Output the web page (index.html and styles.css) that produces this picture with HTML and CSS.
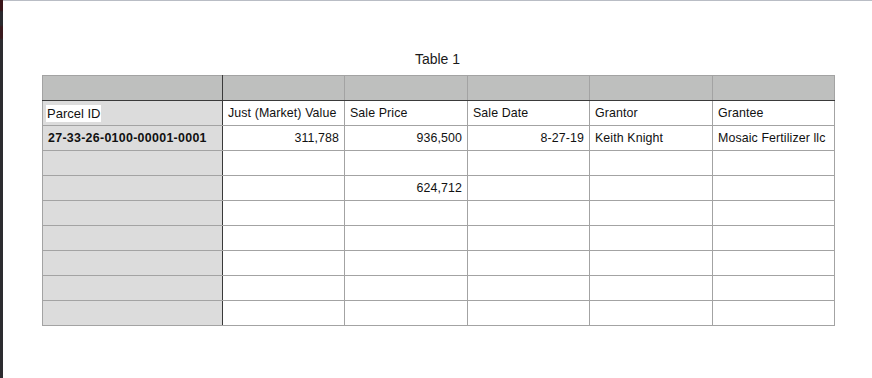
FILE: index.html
```html
<!DOCTYPE html>
<html>
<head>
<meta charset="utf-8">
<link rel="stylesheet" href="styles.css">
</head>
<body>
<div class="strip"></div>
<div class="page">
  <div class="title">Table 1</div>
  <table class="grid">
    <colgroup>
      <col class="c1"><col class="c2"><col class="c3"><col class="c4"><col class="c5"><col class="c6">
    </colgroup>
    <tr class="head"><td class="first"></td><td></td><td></td><td></td><td></td><td></td></tr>
    <tr><td class="first"><span class="hl">Parcel ID</span></td><td>Just (Market) Value</td><td>Sale Price</td><td>Sale Date</td><td>Grantor</td><td>Grantee</td></tr>
    <tr><td class="first bold">27-33-26-0100-00001-0001</td><td class="num">311,788</td><td class="num">936,500</td><td class="num">8-27-19</td><td>Keith Knight</td><td>Mosaic Fertilizer llc</td></tr>
    <tr><td class="first"></td><td></td><td></td><td></td><td></td><td></td></tr>
    <tr><td class="first"></td><td></td><td class="num">624,712</td><td></td><td></td><td></td></tr>
    <tr><td class="first"></td><td></td><td></td><td></td><td></td><td></td></tr>
    <tr><td class="first"></td><td></td><td></td><td></td><td></td><td></td></tr>
    <tr><td class="first"></td><td></td><td></td><td></td><td></td><td></td></tr>
    <tr><td class="first"></td><td></td><td></td><td></td><td></td><td></td></tr>
    <tr><td class="first"></td><td></td><td></td><td></td><td></td><td></td></tr>
  </table>
</div>
</body>
</html>
```
FILE: styles.css
```css
html, body {
  margin: 0;
  padding: 0;
  background: #ffffff;
}
body {
  width: 872px;
  height: 378px;
  display: flex;
  overflow: hidden;
  font-family: "Liberation Sans", Arial, sans-serif;
  color: #111;
}
.strip {
  width: 3px;
  flex: none;
  background: linear-gradient(to bottom, #3a1418 0px, #3a1418 10px, #2a2a2e 12px, #2a2a2e 25px, #3a1a1e 27px, #3a1a1e 38px, #2c2c30 40px, #2c2c30 100%);
}
.page {
  flex: 1;
  border-top: 1px solid #b9bdc5;
}
.title {
  text-align: center;
  font-size: 14px;
  line-height: 16px;
  margin-top: 50px;
  margin-bottom: 8px;
  color: #1a1a1a;
}
.grid {
  margin-left: 39px;
  border-collapse: collapse;
  table-layout: fixed;
  width: 793px;
  border: 1px solid #a3a3a3;
  font-size: 12.4px;
  letter-spacing: 0.1px;
}
.c1 { width: 180px; }
.c2 { width: 122px; }
.c3 { width: 123px; }
.c4 { width: 122px; }
.c5 { width: 123px; }
.c6 { width: 122px; }
.grid td {
  border: 1px solid #a3a3a3;
  height: 25px;
  padding: 0 5px;
  box-sizing: border-box;
  white-space: nowrap;
  overflow: hidden;
  vertical-align: middle;
}
.grid tr.head td {
  background: #bebfbe;
  border-bottom: 1px solid #3a3a3a;
}
.grid td.first {
  background: #dcdcdc;
  border-right: 1px solid #3a3a3a;
}
.grid tr.head td.first {
  background: #bebfbe;
}
.hl {
  background: #ffffff;
  font-size: 13px;
  padding: 1px 1px;
  margin-left: -2px;
  letter-spacing: 0;
}
.bold {
  font-weight: bold;
  letter-spacing: 0.3px;
}
.num {
  text-align: right;
}
```
